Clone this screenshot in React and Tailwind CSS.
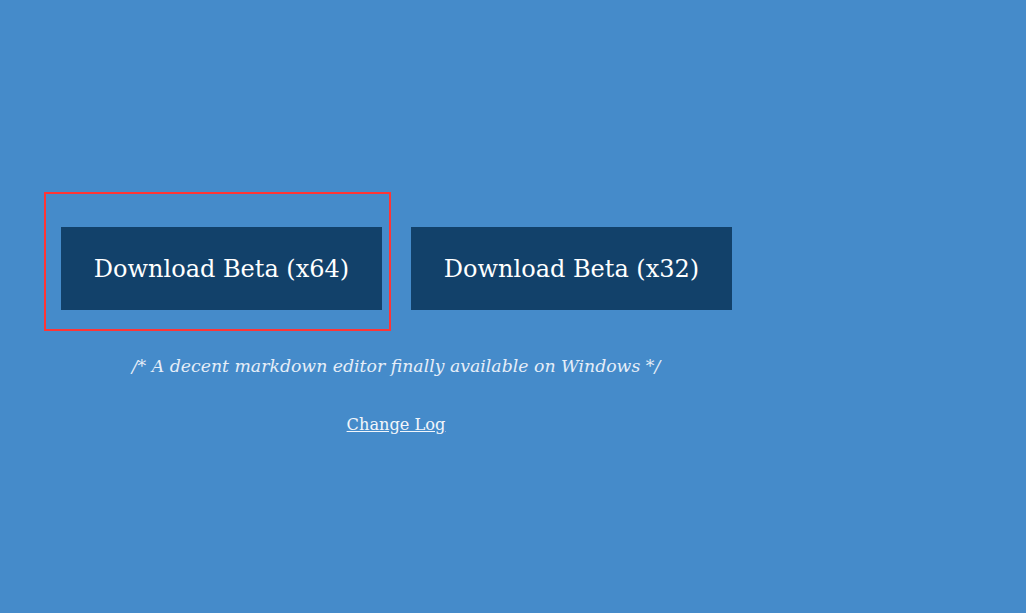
import React from "react";

function DownloadButton({ label }) {
  return (
    <a
      href="#"
      className="flex h-[83px] w-[321px] items-center justify-center bg-[#12416a] text-[24px] text-white"
    >
      {label}
    </a>
  );
}

export default function App() {
  return (
    <div
      className="h-[613px] w-full bg-[#458bca] text-white"
      style={{ fontFamily: '"DejaVu Serif", Georgia, serif' }}
    >
      <div className="w-[704px] pl-[44px] pt-[192px] box-content">
        <div className="flex items-start">
          <div className="border-2 border-[#ff3535] pt-[33px] pb-[19px] pl-[15px] pr-[7px]">
            <DownloadButton label="Download Beta (x64)" />
          </div>
          <div className="ml-[20px] mt-[35px]">
            <DownloadButton label="Download Beta (x32)" />
          </div>
        </div>
        <p className="mt-[23px] text-center text-[17.3px] italic text-[#e6eef8]">
          /* A decent markdown editor finally available on Windows */
        </p>
        <p className="mt-[33px] text-center text-[16.2px]">
          <a href="#" className="underline text-[#f2f6fb]">Change Log</a>
        </p>
      </div>
    </div>
  );
}
